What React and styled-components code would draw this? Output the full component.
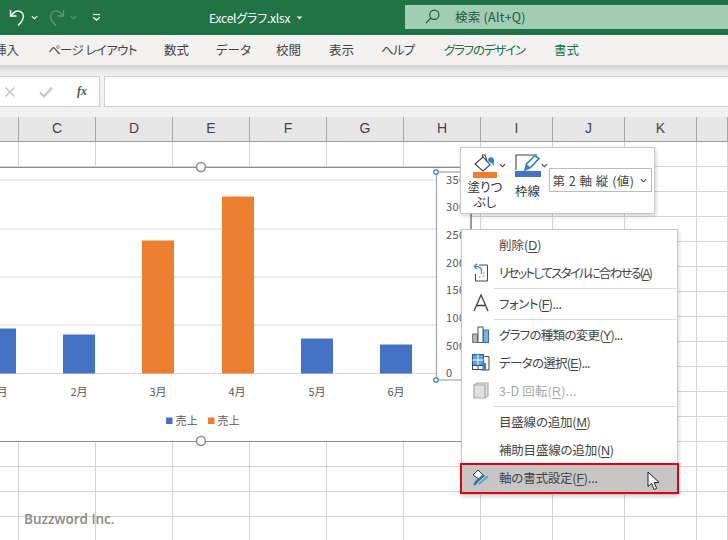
import React from "react";
import styled, { createGlobalStyle } from "styled-components";

const GlobalStyle = createGlobalStyle`
  html, body {
    margin: 0;
    padding: 0;
    background: #fff;
  }
  * {
    box-sizing: border-box;
  }
`;

const cjk = `"Noto Sans CJK JP", "Noto Sans", sans-serif`;

const Page = styled.div`
  position: relative;
  width: 728px;
  height: 540px;
  overflow: hidden;
  font-family: ${cjk};
  font-feature-settings: "palt";
  color: #444;
`;

const TitleBar = styled.div`
  display: flex;
  align-items: center;
  height: 35px;
  padding-left: 9px;
  background: #217346;
  color: #fff;
`;

const QuickAccess = styled.div`
  display: flex;
  align-items: center;
  width: 200px;
`;

const Gap = styled.span`
  flex: none;
  width: ${(p) => p.$w}px;
`;

const FileName = styled.div`
  display: flex;
  align-items: center;
  gap: 6px;
  width: 196px;
  font-size: 12px;
  line-height: 16px;
  letter-spacing: -0.2px;
`;

const SearchBox = styled.div`
  display: flex;
  align-items: center;
  flex: 1;
  height: 24px;
  margin-top: -1px;
  padding: 0 0 1px 20px;
  gap: 15px;
  background: #a0cdb3;
  color: #235a3f;
  font-size: 12.5px;
  letter-spacing: 0.25px;
`;

const TabBar = styled.div`
  display: flex;
  align-items: center;
  height: 30px;
  background: #f3f2f1;
  overflow: hidden;
`;

const Tab = styled.div`
  flex: none;
  width: ${(p) => p.$width}px;
  margin-left: ${(p) => p.$offset}px;
  font-size: 12.5px;
  line-height: 18px;
  white-space: nowrap;
  letter-spacing: ${(p) => p.$spacing || 0}px;
  color: ${(p) => (p.$accent ? "#217346" : "#444")};
`;

const RibbonShadow = styled.div`
  height: 11px;
  background: linear-gradient(#d0d0d0, #ececec 70%, #f1f1f1);
`;

const FormulaBar = styled.div`
  display: flex;
  gap: 4px;
  height: 41px;
  padding-bottom: 10px;
  background: #f1f1f1;
`;

const FormulaButtons = styled.div`
  display: flex;
  align-items: center;
  width: 101px;
  margin-left: -1px;
  padding-left: 4px;
  background: #fff;
  border: 1px solid #d0d0d0;
`;

const FormulaInput = styled.div`
  flex: 1;
  margin-right: -1px;
  background: #fff;
  border: 1px solid #d0d0d0;
`;

const FxLabel = styled.span`
  margin-left: 24px;
  font-family: "Liberation Serif", serif;
  font-style: italic;
  font-weight: 700;
  font-size: 12px;
  color: #555;
`;

const Columns = styled.div`
  display: grid;
  grid-template-columns: 19px repeat(6, 77px) repeat(3, 72px) 31px;
`;

const ColumnHead = styled.div`
  display: flex;
  align-items: center;
  justify-content: center;
  height: 25px;
  padding-bottom: 2px;
  background: #e6e6e6;
  border-right: 1px solid #a6a6a6;
  border-bottom: 1px solid #9e9e9e;
  font-family: "Liberation Sans", sans-serif;
  font-size: 14px;
  color: #444;
`;

const Cell = styled.div`
  height: 25px;
  border-right: 1px solid #d4d4d4;
  border-bottom: 1px solid #d4d4d4;
`;

const ChartFrame = styled.div`
  position: absolute;
  left: -2px;
  top: 166.5px;
  width: 474px;
  height: 275px;
  background: #fff;
  border: 1.5px solid #8e8e8e;
`;

const ChartSvg = styled.svg`
  display: block;
  position: absolute;
  left: -1.5px;
  top: -1.5px;
  overflow: visible;
  text {
    font-family: ${cjk};
    font-size: 11px;
    fill: #595959;
  }
`;

const Watermark = styled.div`
  position: absolute;
  left: 24px;
  top: 510px;
  font-family: "Open Sans", sans-serif;
  font-weight: 600;
  font-size: 13.5px;
  line-height: 18px;
  color: #8a8a8a;
`;

const MiniToolbar = styled.div`
  position: absolute;
  left: 460px;
  top: 147px;
  display: flex;
  width: 195px;
  height: 67px;
  background: #fff;
  border: 1px solid #c8c8c8;
  box-shadow: 1px 2px 4px rgba(0, 0, 0, 0.18);
`;

const ToolButton = styled.div`
  display: flex;
  flex-direction: column;
  align-items: center;
  flex: none;
  width: ${(p) => p.$width}px;
  margin-left: ${(p) => p.$offset}px;
  padding-top: 6px;
  svg {
    flex: none;
  }
`;

const ColorBar = styled.div`
  flex: none;
  width: ${(p) => p.$width}px;
  height: 6px;
  background: ${(p) => p.$color};
`;

const ToolLabel = styled.div`
  margin-top: ${(p) => p.$top}px;
  font-size: 12.5px;
  line-height: 15px;
  text-align: center;
  white-space: nowrap;
  color: #333;
`;

const ToolChevron = styled.div`
  flex: none;
  height: 7px;
  margin: 14px 0 0 ${(p) => p.$offset}px;
  line-height: 0;
`;

const AxisSelect = styled.div`
  display: flex;
  align-items: center;
  justify-content: space-between;
  flex: none;
  width: 103px;
  height: 24px;
  margin: 20px 0 0 1px;
  padding: 0 4px 0 3px;
  border: 1px solid #bdbdbd;
  font-size: 12.5px;
  font-feature-settings: normal;
  letter-spacing: 0.5px;
  white-space: pre;
  color: #444;
`;

const Menu = styled.div`
  position: absolute;
  left: 461px;
  top: 229px;
  width: 217px;
  height: 266px;
  padding-top: 1px;
  background: #fff;
  border: 1px solid #c8c8c8;
  box-shadow: 1px 2px 4px rgba(0, 0, 0, 0.16);
`;

const MenuRow = styled.div`
  display: flex;
  align-items: center;
  height: ${(p) => (p.$active ? 31 : 28)}px;
  margin: ${(p) => (p.$active ? "-1px -2px -1px -2px" : "0")};
  padding-bottom: 2px;
  background: ${(p) => (p.$active ? "#c8c6c4" : "transparent")};
  border: ${(p) => (p.$active ? "2px solid #e3000f" : "none")};
  color: ${(p) => (p.$disabled ? "#a8a8a8" : "#444")};
  font-size: 12.5px;
  letter-spacing: ${(p) => p.$spacing || 0}px;
  white-space: pre;
`;

const IconSlot = styled.div`
  display: flex;
  align-items: center;
  justify-content: center;
  flex: none;
  width: 37px;
`;

const MenuRule = styled.div`
  height: 1px;
  margin: 1px 1px 1px 32px;
  background: #d8d8d8;
`;

const Key = styled.span`
  text-decoration: underline;
  text-underline-offset: 2px;
  font-family: "Liberation Sans", sans-serif;
`;

const CursorSvg = styled.svg`
  position: absolute;
  left: 647px;
  top: 471px;
`;

const Chevron = ({ color = "#444", size = 7 }) => (
  <svg width={size} height={size} viewBox="0 0 8 8" fill="none" stroke={color} strokeWidth="1.3">
    <path d="M1 2.5 L4 5.5 L7 2.5" />
  </svg>
);

const UndoIcon = () => (
  <svg width="17" height="19" viewBox="0 0 17 19" fill="none" stroke="#fff" strokeWidth="1.4">
    <path d="M1.5 2 V8 H7.5" />
    <path d="M1.7 8 C5 3.5 9 2 12 3.8 C16 6.3 15 12 9 17.5" />
  </svg>
);

const RedoIcon = () => (
  <svg width="16" height="19" viewBox="0 0 16 19" fill="none" stroke="#5d9a79" strokeWidth="1.3">
    <path d="M14.5 2 V8 H8.5" />
    <path d="M14.3 8 C11 3.5 7 2 4 3.8 C0 6.3 1 12 7 17.5" />
  </svg>
);

const CustomizeIcon = () => (
  <svg width="9" height="9" viewBox="0 0 9 9" fill="none" stroke="#fff" strokeWidth="1.2">
    <path d="M1 1.5 H8" />
    <path d="M1.2 4.2 L4.5 7.3 L7.8 4.2" />
  </svg>
);

const SearchIcon = () => (
  <svg width="15" height="15" viewBox="0 0 15 15" fill="none" stroke="#235a3f" strokeWidth="1.2">
    <circle cx="9.3" cy="5.7" r="4.6" />
    <path d="M6 9 L1 14" />
  </svg>
);

const CaretDown = () => (
  <svg width="7" height="4" viewBox="0 0 8 5" fill="#fff">
    <path d="M0.5 0.5 H7.5 L4 4.5 Z" />
  </svg>
);

const CancelIcon = () => (
  <svg width="12" height="12" viewBox="0 0 12 12" stroke="#c4c4c4" strokeWidth="1.5">
    <path d="M1.5 1.5 L10.5 10.5 M10.5 1.5 L1.5 10.5" />
  </svg>
);

const CheckIcon = () => (
  <svg width="14" height="12" viewBox="0 0 14 12" fill="none" stroke="#c4c4c4" strokeWidth="2">
    <path d="M1 6.5 L5 10.5 L13 1.5" />
  </svg>
);

const FillIcon = () => (
  <svg width="24" height="18" viewBox="0 0 24 18" fill="none">
    <path d="M2 10 L10 3 L17 11 L10 17 Z" stroke="#444" strokeWidth="1.1" fill="#fff" />
    <path d="M9.5 3.5 V1 H12 L14 7" stroke="#444" strokeWidth="1.1" />
    <path d="M15 5 C17 2 21 3 21 6 L20.5 12 L18.5 9 L15.5 8 Z" fill="#2e86c9" />
  </svg>
);

const PenIcon = () => (
  <svg width="26" height="17" viewBox="0 0 26 17" fill="none">
    <path d="M22 1 H1 V16" stroke="#444" strokeWidth="1.1" />
    <path d="M10 16 L11.5 10 L20 1.5 L24 4.5 L15.5 13.5 Z" fill="#fff" stroke="#2e86c9" strokeWidth="1.6" />
    <path d="M10 16 L11.5 10 L15.5 13.5 Z" fill="#2e86c9" />
  </svg>
);

const ResetIcon = () => (
  <svg width="16" height="19" viewBox="0 0 16 19" fill="none">
    <path d="M6 2 H14.5 V18 H2.5 V11" stroke="#444" strokeWidth="1" />
    <path d="M4 0.8 L1.2 3.4 L4 6" stroke="#2e86c9" strokeWidth="1.2" />
    <path d="M1.5 3.4 C6.5 3 10 5.5 8 11" stroke="#2e86c9" strokeWidth="1.2" />
    <path d="M10 10 H11.5 M10 13 H11.5 M6 14 H7.5" stroke="#777" strokeWidth="1" />
  </svg>
);

const FontIcon = () => (
  <svg width="16" height="18" viewBox="0 0 16 18" fill="none" stroke="#444" strokeWidth="1.3">
    <path d="M1 17 L8 1 L15 17 M3.5 11.5 H12.5" />
  </svg>
);

const ChartTypeIcon = () => (
  <svg width="17" height="17" viewBox="0 0 17 17">
    <rect x="0.5" y="8" width="5" height="8.5" fill="#b3b3b3" stroke="#777" />
    <rect x="6" y="1" width="5" height="15.5" fill="#fff" stroke="#555" />
    <rect x="11.5" y="4" width="5" height="12.5" fill="#7ab3e0" stroke="#2e75b6" />
  </svg>
);

const DataIcon = () => (
  <svg width="18" height="17" viewBox="0 0 18 17">
    <rect x="0.5" y="0.5" width="11" height="11" fill="#5aa5dd" stroke="#1f5f99" />
    <path d="M6 0.5 V15.5 M0.5 6 H11.5" stroke="#fff" strokeWidth="1" />
    <rect x="0.5" y="11.5" width="11" height="4" fill="#fff" stroke="#444" />
    <path d="M6 11.5 V15.5" stroke="#444" />
    <path d="M12.5 2.5 H17 V16 H9.5" fill="none" stroke="#444" />
    <rect x="10.5" y="9" width="3.5" height="7" fill="#2e86c9" />
  </svg>
);

const RotateIcon = () => (
  <svg width="16" height="17" viewBox="0 0 16 17" fill="#e0e0e0" stroke="#aaa" strokeWidth="1.2">
    <path d="M1 3 L4 1 H15 V14 L12 16 H1 Z" />
    <path d="M1 3 H12 V16" fill="none" />
  </svg>
);

const FormatAxisIcon = () => (
  <svg width="18" height="17" viewBox="0 0 18 17" fill="none">
    <path d="M1 6 L6 1 L11 6 L7 10 Z" fill="#fff" stroke="#444" />
    <path d="M3 14 L12 6" stroke="#2e75b6" strokeWidth="2.4" />
    <path d="M7 15 L16 7" stroke="#5aa5dd" strokeWidth="2" />
    <path d="M2 16 L5 13" stroke="#2e75b6" strokeWidth="2" />
  </svg>
);

const columns = ["", "C", "D", "E", "F", "G", "H", "I", "J", "K", ""];
const rowCount = 16;

const tabs = [
  { label: "挿入", offset: -6, width: 26 },
  { label: "ページ レイアウト", offset: 28, width: 87, spacing: -0.6 },
  { label: "数式", offset: 29, width: 26 },
  { label: "データ", offset: 26, width: 32 },
  { label: "校閲", offset: 28, width: 26 },
  { label: "表示", offset: 27, width: 26 },
  { label: "ヘルプ", offset: 26, width: 33, spacing: -0.8 },
  { label: "グラフのデザイン", offset: 30, width: 80, spacing: -1.2, accent: true },
  { label: "書式", offset: 30, width: 26, accent: true },
];

const baseline = 374;
const bars = [
  { x: -16, top: 329, color: "#4472c4" },
  { x: 63, top: 335, color: "#4472c4" },
  { x: 142, top: 241, color: "#ed7d31" },
  { x: 222, top: 197, color: "#ed7d31" },
  { x: 301, top: 339, color: "#4472c4" },
  { x: 380, top: 345, color: "#4472c4" },
];
const gridLines = [180.5, 229.5, 277.5, 325.5];
const months = [
  { label: "1月", x: -1 },
  { label: "2月", x: 79 },
  { label: "3月", x: 158 },
  { label: "4月", x: 237 },
  { label: "5月", x: 317 },
  { label: "6月", x: 396 },
];
const axisLabels = [
  { label: "3500", y: 184 },
  { label: "3000", y: 211 },
  { label: "2500", y: 239 },
  { label: "2000", y: 267 },
  { label: "1500", y: 294 },
  { label: "1000", y: 322 },
  { label: "500", y: 350 },
  { label: "0", y: 377 },
];

const menuItems = [
  { label: "削除", key: "D" },
  { label: "リセットしてスタイルに合わせる", key: "A", icon: <ResetIcon />, spacing: -1.85 },
  { rule: true },
  { label: "フォント", key: "F", dots: true, icon: <FontIcon />, spacing: -0.5 },
  { rule: true },
  { label: "グラフの種類の変更", key: "Y", dots: true, icon: <ChartTypeIcon />, spacing: -0.7 },
  { label: "データの選択", key: "E", dots: true, icon: <DataIcon />, spacing: -0.7 },
  { label: "3-D 回転", key: "R", dots: true, icon: <RotateIcon />, spacing: 0.15, disabled: true },
  { rule: true },
  { label: "目盛線の追加", key: "M", spacing: -0.2 },
  { label: "補助目盛線の追加", key: "N", spacing: -0.2 },
  { label: "軸の書式設定", key: "F", dots: true, icon: <FormatAxisIcon />, spacing: -0.2, active: true },
];

const Chart = () => (
  <ChartFrame>
    <ChartSvg width="474" height="275" viewBox="-2 166.5 474 275">
      {gridLines.map((y) => (
        <line key={y} x1="-2" x2="436" y1={y} y2={y} stroke="#d9d9d9" strokeWidth="1" />
      ))}
      <line x1="-2" x2="436" y1={baseline} y2={baseline} stroke="#d9d9d9" strokeWidth="1" />
      {bars.map((bar) => (
        <rect key={bar.x} x={bar.x} y={bar.top} width="32" height={baseline - bar.top} fill={bar.color} />
      ))}
      {months.map((m) => (
        <text key={m.label} x={m.x} y="396" textAnchor="middle">
          {m.label}
        </text>
      ))}
      {axisLabels.map((a) => (
        <text key={a.label} x="446" y={a.y} letterSpacing="0.4">
          {a.label}
        </text>
      ))}
      <rect x="166" y="418" width="6.5" height="6.5" fill="#4472c4" />
      <text x="175.5" y="425.5" letterSpacing="0.3">売上</text>
      <rect x="208" y="418" width="6.5" height="6.5" fill="#ed7d31" />
      <text x="217.5" y="425.5" letterSpacing="0.3">売上</text>
      <rect x="436.5" y="172.5" width="34" height="208" fill="none" stroke="#a6a6a6" strokeWidth="1.2" />
      <circle cx="436" cy="172.5" r="2.2" fill="#fff" stroke="#2e86c9" strokeWidth="1.3" />
      <circle cx="436" cy="380.5" r="2.2" fill="#fff" stroke="#2e86c9" strokeWidth="1.3" />
      <circle cx="201" cy="167.5" r="4.5" fill="#fff" stroke="#8e8e8e" strokeWidth="1.6" />
      <circle cx="201" cy="441.5" r="4.5" fill="#fff" stroke="#8e8e8e" strokeWidth="1.6" />
    </ChartSvg>
  </ChartFrame>
);

const App = () => (
  <Page>
    <GlobalStyle />
    <TitleBar>
      <QuickAccess>
        <UndoIcon />
        <Gap $w={5} />
        <Chevron color="#fff" size={7} />
        <Gap $w={11} />
        <RedoIcon />
        <Gap $w={5} />
        <Chevron color="#5d9a79" size={7} />
        <Gap $w={15} />
        <CustomizeIcon />
      </QuickAccess>
      <FileName>
        Excelグラフ.xlsx
        <CaretDown />
      </FileName>
      <SearchBox>
        <SearchIcon />
        検索 (Alt+Q)
      </SearchBox>
    </TitleBar>
    <TabBar>
      {tabs.map((tab) => (
        <Tab key={tab.label} $width={tab.width} $offset={tab.offset} $spacing={tab.spacing} $accent={tab.accent}>
          {tab.label}
        </Tab>
      ))}
    </TabBar>
    <RibbonShadow />
    <FormulaBar>
      <FormulaButtons>
        <CancelIcon />
        <Gap $w={23} />
        <CheckIcon />
        <FxLabel>fx</FxLabel>
      </FormulaButtons>
      <FormulaInput />
    </FormulaBar>
    <Columns>
      {columns.map((name, i) => (
        <ColumnHead key={i}>{name}</ColumnHead>
      ))}
      {Array.from({ length: rowCount * columns.length }, (_, i) => (
        <Cell key={i} />
      ))}
    </Columns>
    <Chart />
    <Watermark>Buzzword Inc.</Watermark>
    <MiniToolbar>
      <ToolButton $width={36} $offset={6}>
        <FillIcon />
        <ColorBar $width={24} $color="#ed7d31" />
        <ToolLabel $top={1}>
          塗りつ
          <br />
          ぶし
        </ToolLabel>
      </ToolButton>
      <ToolChevron $offset={-4}>
        <Chevron />
      </ToolChevron>
      <ToolButton $width={30} $offset={6.5}>
        <PenIcon />
        <ColorBar $width={26} $color="#4472c4" />
        <ToolLabel $top={6}>枠線</ToolLabel>
      </ToolButton>
      <ToolChevron $offset={-2}>
        <Chevron />
      </ToolChevron>
      <AxisSelect>
        第 2 軸 縦 (値)
        <Chevron />
      </AxisSelect>
    </MiniToolbar>
    <Menu>
      {menuItems.map((item, i) =>
        item.rule ? (
          <MenuRule key={i} />
        ) : (
          <MenuRow key={i} $active={item.active} $disabled={item.disabled} $spacing={item.spacing}>
            <IconSlot>{item.icon}</IconSlot>
            <span>
              {item.label}(<Key>{item.key}</Key>){item.dots ? "..." : ""}
            </span>
          </MenuRow>
        )
      )}
    </Menu>
    <CursorSvg width="14" height="20" viewBox="0 0 14 20">
      <path d="M1 1 V15.5 L4.6 12.4 L7 18.5 L9.6 17.4 L7.2 11.6 L12 11.4 Z" fill="#fff" stroke="#222" strokeWidth="1" />
    </CursorSvg>
  </Page>
);

export default App;
